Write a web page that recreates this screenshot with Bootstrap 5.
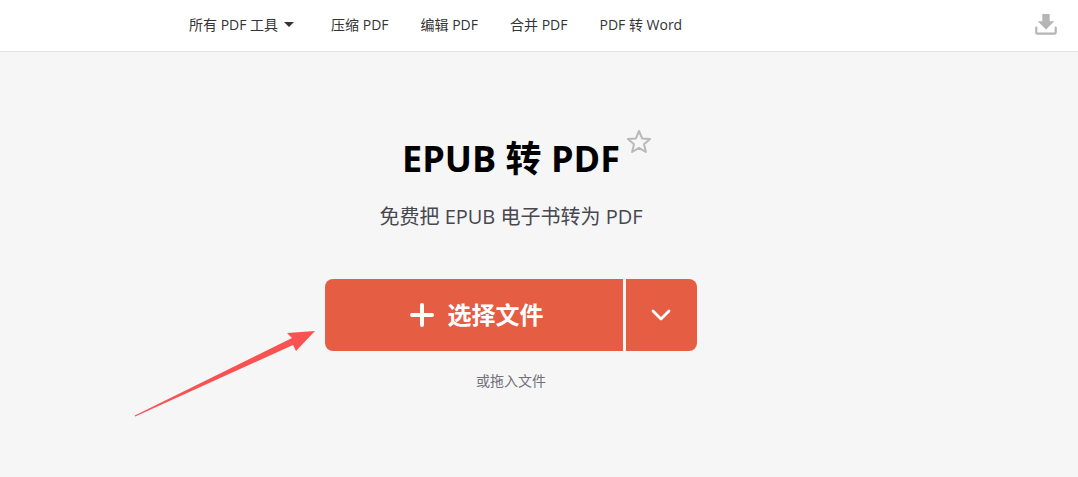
<!DOCTYPE html>
<html lang="zh">
<head>
<meta charset="utf-8">
<title>EPUB 转 PDF</title>
<link href="https://cdn.jsdelivr.net/npm/bootstrap@5.3.0/dist/css/bootstrap.min.css" rel="stylesheet">
<style>
html,body{height:100%}
body{background:#f6f6f6;font-family:"Open Sans","Noto Sans CJK SC",sans-serif;overflow:hidden;position:relative}
.topbar{height:52px;background:#fff;border-bottom:1px solid #e3e3e3;padding-left:189px;padding-right:21px;padding-bottom:2px}
.toplink{color:#333;font-size:14px;text-decoration:none;white-space:nowrap}
.caret-down{width:0;height:0;border-left:5px solid transparent;border-right:5px solid transparent;border-top:5px solid #333;margin-left:6px}
.gap-nav{gap:32px}
.first-item{margin-right:5px}
.dl-icon{margin-bottom:2px}
.hero{padding-top:82px;padding-right:56px}
.main-title{font-size:36px;font-weight:700;color:#000;line-height:50px;margin:0}
.star-icon{position:absolute;left:100%;top:-5px;margin-left:6px}
.sub-title{font-size:20px;color:#47474f;line-height:26px;margin:20px 0 49px}
.pick-btn{width:298px;height:72px;background:#e55e43;color:#fff;font-size:24px;font-weight:700;border:0;border-radius:8px 0 0 8px;gap:14px;padding-left:11px}
.more-btn{width:71px;height:72px;background:#e55e43;border:0;border-radius:0 8px 8px 0;margin-left:3px;padding-right:7px}
.drop-note{font-size:14px;color:#707078;margin-top:20px;line-height:20px}
.pointer-arrow{position:absolute;left:0;top:0;pointer-events:none}
</style>
</head>
<body>
<nav class="topbar d-flex align-items-center justify-content-between">
  <div class="d-flex align-items-center gap-nav">
    <a class="toplink d-flex align-items-center first-item" href="#">所有 PDF 工具<span class="caret-down"></span></a>
    <a class="toplink" href="#">压缩 PDF</a>
    <a class="toplink" href="#">编辑 PDF</a>
    <a class="toplink" href="#">合并 PDF</a>
    <a class="toplink" href="#">PDF 转 Word</a>
  </div>
  <svg class="dl-icon" width="22" height="22" viewBox="0 0 24 24" aria-label="下载"><path fill="#b5b5b5" d="M8 1h8v8h5l-9 9-9-9h5z"/><path fill="none" stroke="#b5b5b5" stroke-width="2.4" stroke-linecap="round" d="M1.400 16v5.200q0 1.400 1.400 1.400h18.400q1.400 0 1.400-1.400V16"/></svg>
</nav>
<main class="hero text-center">
  <div class="d-flex justify-content-center">
    <div class="position-relative">
      <h1 class="main-title">EPUB 转 PDF</h1>
      <svg class="star-icon" width="26" height="25" viewBox="0 0 26 25"><path fill="none" stroke="#b9b9b9" stroke-width="2" stroke-linejoin="round" d="M13 2l3.100 7.400 8 .6-6.100 5.200 1.900 7.800-6.900-4.200-6.900 4.200 1.900-7.800L1.900 10l8-.6z"/></svg>
    </div>
  </div>
  <p class="sub-title">免费把 EPUB 电子书转为 PDF</p>
  <div class="d-flex justify-content-center">
    <button class="pick-btn d-flex align-items-center justify-content-center" type="button">
      <svg width="24" height="24" viewBox="0 0 24 24"><path stroke="#fff" stroke-width="4" stroke-linecap="round" d="M12 2v20M2 12h20"/></svg>
      <span>选择文件</span>
    </button>
    <button class="more-btn d-flex align-items-center justify-content-center" type="button" aria-label="更多">
      <svg width="20" height="12" viewBox="0 0 20 12"><path fill="none" stroke="#fff" stroke-width="2.800" stroke-linecap="round" stroke-linejoin="round" d="M2 2l8 8 8-8"/></svg>
    </button>
  </div>
  <div class="drop-note">或拖入文件</div>
</main>
<svg class="pointer-arrow" width="1078" height="477" viewBox="0 0 1078 477"><path fill="#fa5252" d="M134.800 415.500L292 338 287 333 315 331 296 351 293 345 135.200 416.500z"/></svg>
<script src="https://cdn.jsdelivr.net/npm/bootstrap@5.3.0/dist/js/bootstrap.bundle.min.js"></script>
</body>
</html>
